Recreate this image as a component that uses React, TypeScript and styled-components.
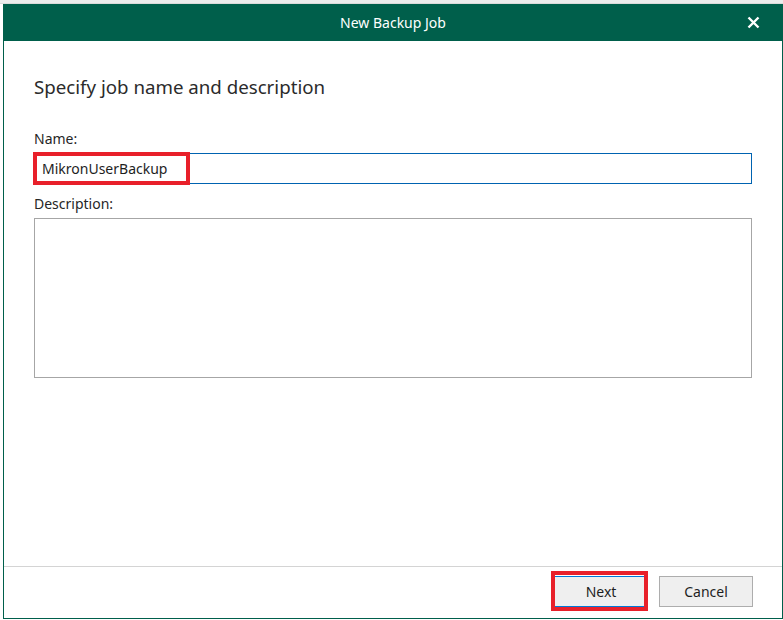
import React, { useState } from 'react';
import styled, { createGlobalStyle } from 'styled-components';

const GlobalStyle = createGlobalStyle`
  html, body {
    margin: 0;
    padding: 0;
    background: #ffffff;
  }
  body {
    font-family: 'Noto Sans', 'Open Sans', 'Liberation Sans', sans-serif;
    color: #202020;
  }
`;

const TopStrip = styled.div`
  height: 3px;
  background: #ececec;
  border-bottom: 1px solid #dadada;
`;

const Window = styled.div`
  margin-left: 3px;
  width: 780px;
  height: 615px;
  box-sizing: border-box;
  border: 1px solid #005f4b;
  border-top: none;
  display: flex;
  flex-direction: column;
  background: #ffffff;
`;

const TitleBar = styled.div`
  height: 37px;
  margin: 0 -1px;
  background: #005f4b;
  color: #ffffff;
  display: flex;
  align-items: center;
  justify-content: center;
  position: relative;
  font-size: 14px;
`;

const CloseButton = styled.button`
  position: absolute;
  right: 22px;
  top: 10px;
  width: 16px;
  height: 16px;
  padding: 0;
  border: none;
  background: transparent;
  cursor: pointer;
  display: flex;
  align-items: center;
  justify-content: center;
`;

const Body = styled.div`
  flex: 1;
  padding: 33px 30px 0 30px;
  display: flex;
  flex-direction: column;
`;

const Heading = styled.h1`
  margin: 0 0 30px 0;
  font-size: 18.7px;
  font-weight: 400;
  color: #2b2b2b;
  line-height: 26px;
`;

const Label = styled.label`
  display: block;
  font-size: 14px;
  line-height: 18px;
  color: #262626;
  margin-bottom: 5px;
`;

const Field = styled.div`
  position: relative;
  margin-bottom: 11px;
`;

const TextInput = styled.input`
  display: block;
  width: 718px;
  height: 31px;
  box-sizing: border-box;
  border: 1px solid #0063b1;
  padding: 0 7px;
  font-family: inherit;
  font-size: 14px;
  color: #1e1e1e;
  outline: none;
`;

const TextArea = styled.textarea`
  display: block;
  width: 718px;
  height: 160px;
  box-sizing: border-box;
  border: 1px solid #a6a6a6;
  resize: none;
  font-family: inherit;
  font-size: 14px;
  outline: none;
`;

const Highlight = styled.div<{ $w: number; $h: number; $l: number; $t: number }>`
  position: absolute;
  left: ${(p) => p.$l}px;
  top: ${(p) => p.$t}px;
  width: ${(p) => p.$w}px;
  height: ${(p) => p.$h}px;
  box-sizing: border-box;
  border: 4px solid #e8202a;
  pointer-events: none;
`;

const Footer = styled.div`
  height: 52px;
  border-top: 1px solid #d4d4d4;
  display: flex;
  justify-content: flex-end;
  align-items: flex-start;
  gap: 11px;
  padding: 9px 29px 0 0;
  box-sizing: border-box;
`;

const ButtonWrap = styled.div`
  position: relative;
`;

const Button = styled.button<{ $primary?: boolean }>`
  width: 94px;
  height: 31px;
  background: #efefef;
  border: 1px solid ${(p) => (p.$primary ? '#0078d7' : '#adadad')};
  font-family: inherit;
  font-size: 14px;
  color: #1e1e1e;
  cursor: pointer;
`;

export default function App() {
  const [name, setName] = useState('MikronUserBackup');
  const [desc, setDesc] = useState('');

  return (
    <>
      <GlobalStyle />
      <TopStrip />
      <Window>
        <TitleBar>
          New Backup Job
          <CloseButton aria-label="Close">
            <svg width="13" height="13" viewBox="0 0 13 13">
              <path d="M1.5 1.5 L11.5 11.5 M11.5 1.5 L1.5 11.5" stroke="#ffffff" strokeWidth="2.4" />
            </svg>
          </CloseButton>
        </TitleBar>
        <Body>
          <Heading>Specify job name and description</Heading>
          <Label>Name:</Label>
          <Field>
            <TextInput value={name} onChange={(e) => setName(e.target.value)} />
            <Highlight $l={-1} $t={-1} $w={157} $h={33} />
          </Field>
          <Label>Description:</Label>
          <TextArea value={desc} onChange={(e) => setDesc(e.target.value)} />
        </Body>
        <Footer>
          <ButtonWrap>
            <Button $primary>Next</Button>
            <Highlight $l={-3} $t={-5} $w={97} $h={40} />
          </ButtonWrap>
          <Button>Cancel</Button>
        </Footer>
      </Window>
    </>
  );
}
